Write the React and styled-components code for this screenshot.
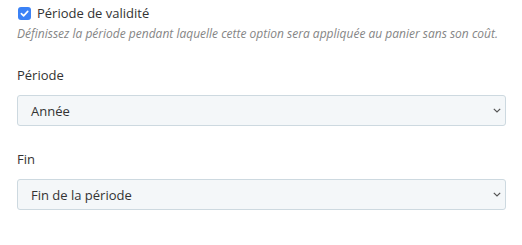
import React from 'react';
import styled, { createGlobalStyle } from 'styled-components';

const GlobalStyle = createGlobalStyle`
	body {
		margin: 0;
		background: #fff;
		font-family: "Open Sans", "Liberation Sans", sans-serif;
		color: #333;
	}
`;

const Form = styled.div`
	display: flex;
	flex-direction: column;
	padding: 5px 16px 0 17px;
	width: 489px;
`;

const CheckRow = styled.label`
	display: flex;
	align-items: center;
	gap: 6px;
	font-size: 13px;
	line-height: 16px;
	color: #333;
`;

const Box = styled.span`
	display: flex;
	align-items: center;
	justify-content: center;
	width: 13px;
	height: 13px;
	margin-left: 1px;
	border-radius: 3px;
	background: #3b82f6;
`;

const Hint = styled.p`
	margin: 5px 0 0 0;
	font-size: 12px;
	line-height: 16px;
	font-style: italic;
	color: #858585;
`;

const Field = styled.div`
	display: flex;
	flex-direction: column;
	margin-top: ${(p) => p.top}px;
`;

const Label = styled.span`
	font-size: 13px;
	line-height: 16px;
	color: #333;
	margin-bottom: 12px;
`;

const Select = styled.div`
	display: flex;
	align-items: center;
	justify-content: space-between;
	height: 29px;
	padding: 0 4px 0 13px;
	border: 1px solid #cdd9e0;
	border-radius: 3px;
	background: #f4f7f9;
	font-size: 13px;
	color: #333;
`;

const Check = () => (
	<svg width="9" height="9" viewBox="0 0 10 10">
		<path d="M1.5 5.2 L4 7.6 L8.6 2.6" fill="none" stroke="#fff" strokeWidth="1.8" strokeLinecap="round" strokeLinejoin="round" />
	</svg>
);

const Chevron = () => (
	<svg width="8" height="5" viewBox="0 0 8 5">
		<path d="M0.8 0.8 L4 4 L7.2 0.8" fill="none" stroke="#555" strokeWidth="1.2" />
	</svg>
);

export default function App() {
	return (
		<>
			<GlobalStyle />
			<Form>
				<CheckRow>
					<Box><Check /></Box>
					Période de validité
				</CheckRow>
				<Hint>Définissez la période pendant laquelle cette option sera appliquée au panier sans son coût.</Hint>
				<Field top={25}>
					<Label>Période</Label>
					<Select>
						<span>Année</span>
						<Chevron />
					</Select>
				</Field>
				<Field top={25}>
					<Label>Fin</Label>
					<Select>
						<span>Fin de la période</span>
						<Chevron />
					</Select>
				</Field>
			</Form>
		</>
	);
}
